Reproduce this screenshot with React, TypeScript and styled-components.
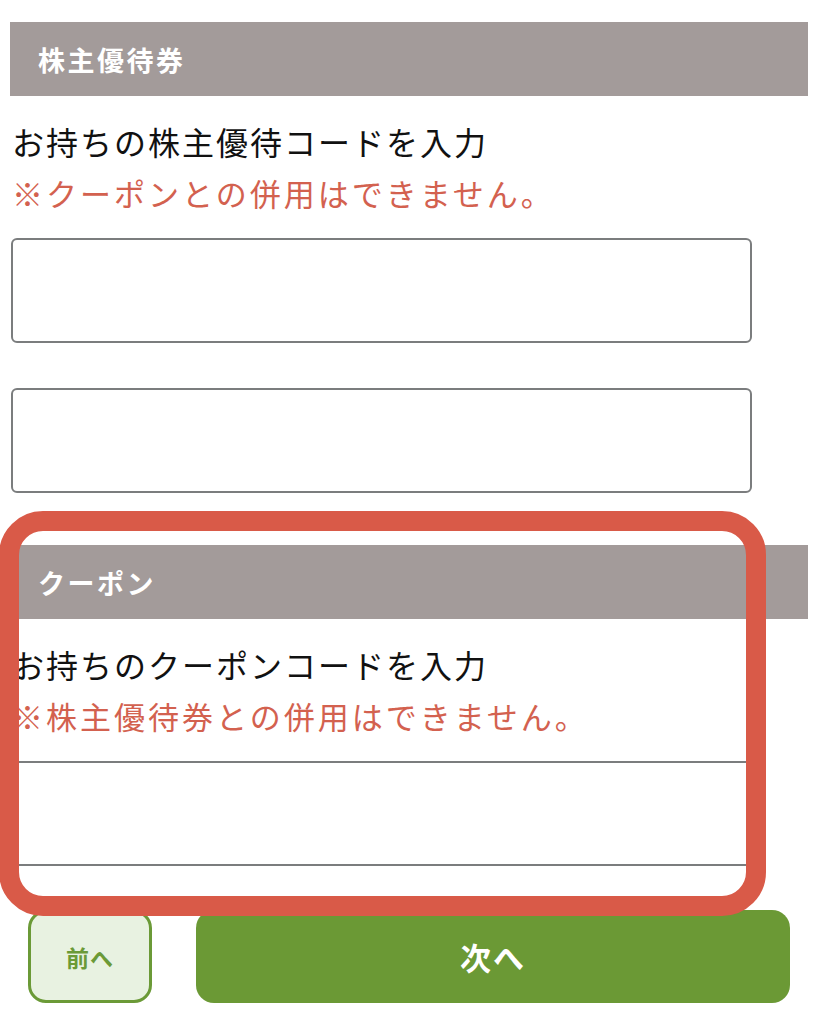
import React from 'react';
import styled, { createGlobalStyle } from 'styled-components';

const GlobalStyle = createGlobalStyle`
  html, body {
    margin: 0;
    padding: 0;
    background: #fff;
  }
  body {
    font-family: "Noto Sans CJK JP", "Noto Sans", sans-serif;
  }
`;

const StyledPage = styled.div`
  width: 798px;
  padding: 22px 0 0 10px;
`;

const StyledSection = styled.section<{ spaced?: boolean }>`
  position: relative;
  margin-top: ${props => props.spaced ? '52px' : '0'};
`;

const StyledHeader = styled.div`
  display: flex;
  align-items: center;
  height: 74px;
  padding-left: 28px;
  background: #a39b9a;
  color: #fff;
  font-size: 27px;
  font-weight: 700;
  letter-spacing: 2.5px;
`;

const StyledLabel = styled.div`
  margin-top: 19px;
  padding-left: 2px;
  font-size: 32px;
  line-height: 52px;
  letter-spacing: 2px;
  color: #111;
`;

const StyledNote = styled.div`
  padding-left: 2px;
  font-size: 31px;
  line-height: 52px;
  letter-spacing: 3px;
  color: #d3614f;
`;

const StyledInputList = styled.div`
  display: flex;
  flex-direction: column;
  gap: 45px;
  margin-top: 19px;
`;

const StyledInput = styled.input`
  box-sizing: border-box;
  width: 741px;
  height: 105px;
  margin: 0 0 0 1px;
  padding: 0 16px;
  border: 2px solid #7b7d7e;
  border-radius: 6px;
  background: #fff;
  font-size: 28px;
  font-family: inherit;
  outline: none;
`;

const StyledHighlight = styled.div`
  position: absolute;
  left: -11px;
  top: -34px;
  width: 767px;
  height: 405px;
  box-sizing: border-box;
  border: 20px solid #d95a48;
  border-radius: 44px;
  pointer-events: none;
`;

const StyledActions = styled.div`
  display: flex;
  gap: 44px;
  margin: 44px 0 0 18px;
`;

const StyledButton = styled.button<{ primary?: boolean }>`
  box-sizing: border-box;
  height: 93px;
  width: ${props => props.primary ? '594px' : '124px'};
  border: ${props => props.primary ? 'none' : '3px solid #6b9a37'};
  border-radius: 18px;
  background: ${props => props.primary ? '#6b9935' : '#e8f2e1'};
  color: ${props => props.primary ? '#fff' : '#6b9a37'};
  font-family: "Noto Sans CJK JP", sans-serif;
  font-size: ${props => props.primary ? '31px' : '23px'};
  font-weight: 700;
  letter-spacing: ${props => props.primary ? '2px' : '1px'};
  cursor: pointer;
`;

const App: React.FC = () => {
  return (
    <>
      <GlobalStyle />
      <StyledPage>
        <StyledSection>
          <StyledHeader>株主優待券</StyledHeader>
          <StyledLabel>お持ちの株主優待コードを入力</StyledLabel>
          <StyledNote>※クーポンとの併用はできません。</StyledNote>
          <StyledInputList>
            <StyledInput type="text" />
            <StyledInput type="text" />
          </StyledInputList>
        </StyledSection>

        <StyledSection spaced>
          <StyledHeader>クーポン</StyledHeader>
          <StyledLabel>お持ちのクーポンコードを入力</StyledLabel>
          <StyledNote>※株主優待券との併用はできません。</StyledNote>
          <StyledInputList>
            <StyledInput type="text" />
          </StyledInputList>
          <StyledHighlight />
        </StyledSection>

        <StyledActions>
          <StyledButton>前へ</StyledButton>
          <StyledButton primary>次へ</StyledButton>
        </StyledActions>
      </StyledPage>
    </>
  );
};

export default App;
